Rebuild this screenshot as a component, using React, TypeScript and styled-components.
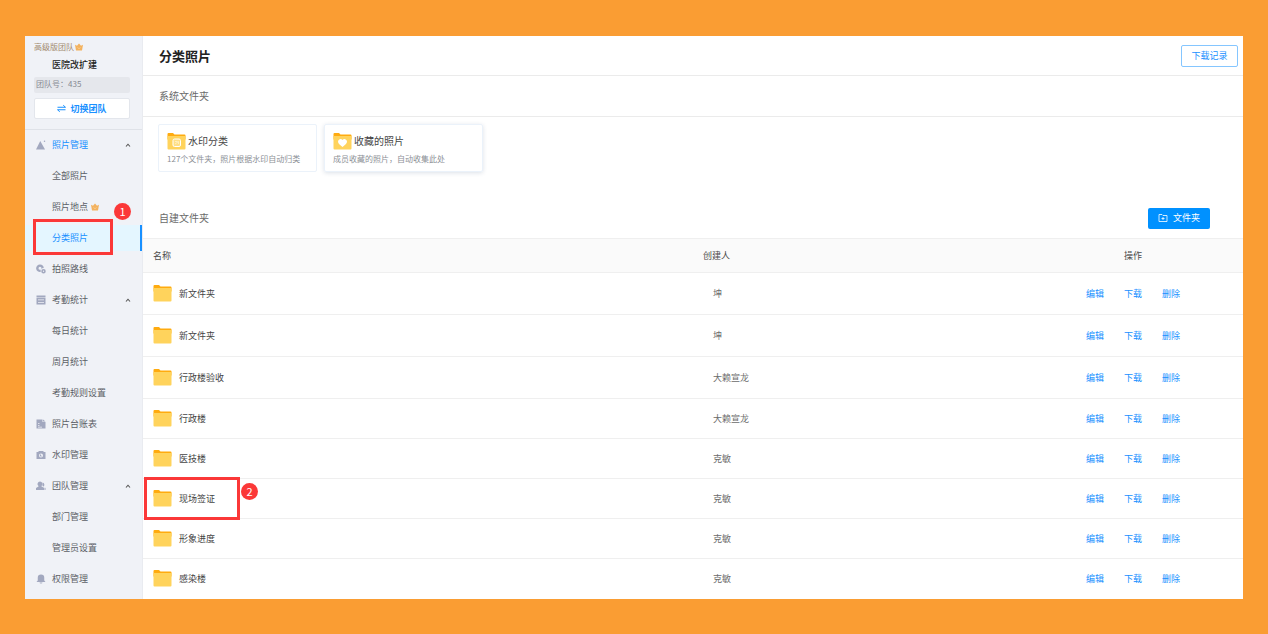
import React, { useState } from "react";
import styled, { createGlobalStyle, css } from "styled-components";

const BLUE = "#1890ff";
const RED = "#fb3838";

const GlobalStyle = createGlobalStyle`
  *, *::before, *::after { box-sizing: border-box; }
  body {
    margin: 0;
    background: #fa9d33;
    color: #555;
    font-family: "Noto Sans CJK SC", "Noto Sans", sans-serif;
    font-size: 9px;
    line-height: 14px;
  }
  h1, h2, h3, p, ul { margin: 0; padding: 0; font-weight: 400; }
  ul { list-style: none; }
  a { color: inherit; text-decoration: none; }
  button { font: inherit; color: inherit; padding: 0; margin: 0; border: 0; background: none; cursor: pointer; }
`;

const Page = styled.div`
  min-height: 100vh;
  padding: 36px 25px 35px;
  display: flex;
`;

const Sidebar = styled.aside`
  flex: 0 0 118px;
  background: #f0f2f7;
  border-right: 1px solid #e9ebf0;
`;

const TeamPanel = styled.div`
  height: 94px;
  padding: 4px 12px 0 9px;
  border-bottom: 1px solid #dfe2e8;
`;

const TeamPlan = styled.p`
  display: flex;
  align-items: center;
  gap: 1px;
  font-size: 8px;
  color: #a28a70;
`;

const TeamName = styled.h2`
  margin-top: 4px;
  padding-left: 18px;
  font-size: 9px;
  font-weight: 500;
  color: #222;
`;

const TeamId = styled.p`
  margin-top: 5px;
  padding: 0 2px;
  height: 16px;
  border-radius: 2px;
  background: #e5e7ec;
  color: #858992;
  font-size: 8px;
`;

const SwitchButton = styled.button`
  display: flex;
  align-items: center;
  justify-content: center;
  gap: 4px;
  width: 100%;
  height: 21px;
  margin-top: 5px;
  border: 1px solid #e3e6ec;
  border-radius: 2px;
  background: #fff;
  color: ${BLUE};
  font-weight: 700;
`;

const Menu = styled.ul`
  display: flex;
  flex-direction: column;
  gap: 5px;
  padding-top: 2px;
`;

const MenuItem = styled.li`
  position: relative;
`;

const entry = css`
  display: flex;
  align-items: center;
  width: 100%;
  height: 26px;
`;

const MenuEntry = styled.a<{ $active?: boolean; $child?: boolean }>`
  ${entry}
  gap: ${(p) => (p.$child ? 3 : 6)}px;
  padding-left: ${(p) => (p.$child ? 27 : 11)}px;
  color: ${(p) => (p.$active ? BLUE : "#5c5f66")};
  background: ${(p) => (p.$active ? "#e4f6ff" : "transparent")};
  border-right: 2px solid ${(p) => (p.$active ? BLUE : "transparent")};
`;

const MenuToggle = styled.button<{ $active?: boolean; $open: boolean }>`
  ${entry}
  gap: 6px;
  padding: 0 11px;
  color: ${(p) => (p.$active ? BLUE : "#5c5f66")};

  svg:last-child {
    margin-left: auto;
    transform: ${(p) => (p.$open ? "none" : "rotate(180deg)")};
  }
`;

const Main = styled.main`
  flex: 1;
  min-width: 0;
  background: #fff;
`;

const TitleBar = styled.header`
  display: flex;
  align-items: center;
  justify-content: space-between;
  height: 40px;
  padding: 0 5px 0 16px;
  border-bottom: 1px solid #ebebeb;
`;

const Title = styled.h1`
  font-size: 13px;
  line-height: 20px;
  font-weight: 700;
  color: #222;
`;

const OutlineButton = styled.button`
  width: 57px;
  height: 22px;
  border: 1px solid #85c6ff;
  border-radius: 2px;
  color: ${BLUE};
`;

const PrimaryButton = styled.button`
  display: flex;
  align-items: center;
  justify-content: center;
  gap: 5px;
  width: 62px;
  height: 21px;
  border-radius: 2px;
  background: #0091ff;
  color: #fff;
`;

const SectionBar = styled.div<{ $ruled?: boolean }>`
  display: flex;
  align-items: center;
  justify-content: space-between;
  height: ${(p) => (p.$ruled ? 41 : 40)}px;
  padding: 0 33px 0 16px;
  border-bottom: ${(p) => (p.$ruled ? "1px solid #ebebeb" : "0")};
`;

const SectionTitle = styled.h2`
  font-size: 10px;
  color: #6a6a6a;
`;

const Cards = styled.div`
  display: flex;
  gap: 7px;
  padding: 7px 15px 26px;
`;

const Card = styled.a<{ $raised?: boolean }>`
  width: 159px;
  height: 48px;
  padding: 8px 7px 0 8px;
  border: 1px solid #ebf2fa;
  border-radius: 2px;
  box-shadow: ${(p) => (p.$raised ? "0 1px 4px rgba(40, 70, 110, 0.16)" : "none")};
`;

const CardTitle = styled.h3`
  display: flex;
  align-items: center;
  gap: 2px;
  height: 16px;
  font-size: 10px;
  color: #444;
`;

const CardNote = styled.p`
  margin-top: 3px;
  font-size: 8px;
  line-height: 14px;
  color: #8c8f96;
  white-space: nowrap;
`;

const FolderTable = styled.table`
  width: 100%;
  table-layout: fixed;
  border-collapse: separate;
  border-spacing: 0;
`;

const HeadCell = styled.th<{ $width: string; $align?: string }>`
  width: ${(p) => p.$width};
  height: 35px;
  padding: 0 10px;
  border-top: 1px solid #efefef;
  border-bottom: 1px solid #efefef;
  background: #fafafa;
  color: #4a4a4a;
  font-weight: 400;
  text-align: ${(p) => p.$align ?? "left"};
`;

const Row = styled.tr<{ $height: number }>`
  height: ${(p) => p.$height}px;

  &:last-child td {
    border-bottom-color: #fff;
  }
`;

const Cell = styled.td`
  padding: 0 10px;
  border-bottom: 1px solid #efefef;
`;

const CreatorCell = styled(Cell)`
  padding-left: 20px;
  color: #6b6b6b;
`;

const FolderLink = styled.a`
  position: relative;
  display: inline-flex;
  align-items: center;
  gap: 7px;
  vertical-align: middle;
  color: #444;
`;

const Actions = styled.div`
  display: flex;
  justify-content: center;
  gap: 20px;
  color: ${BLUE};
`;

const Highlight = styled.span<{ $inset: string }>`
  position: absolute;
  inset: ${(p) => p.$inset};
  border: 3px solid ${RED};
  pointer-events: none;
`;

const StepBadge = styled.span`
  position: absolute;
  right: -21px;
  top: 3px;
  width: 17px;
  height: 17px;
  border-radius: 50%;
  background: ${RED};
  color: #fff;
  font-size: 11px;
  line-height: 17px;
  text-align: center;
`;

const RaisedBadge = styled(StepBadge)`
  top: -19px;
`;

const MenuIcon = ({ name }: { name: string }) => (
  <svg width="10" height="10" viewBox="0 0 20 20" fill="#a2a8bf" aria-hidden="true">
    {name === "photo" && (
      <>
        <path d="M8.5 2 18 19H0z" />
        <circle cx="17" cy="2.500" r="1.500" />
      </>
    )}
    {name === "route" && (
      <>
        <path fillRule="evenodd" d="M8 1a7.500 7.500 0 1 0 1.500 14.800A6 6 0 0 1 15.500 8 7.500 7.500 0 0 0 8 1zm0 4.500a3 3 0 1 1 0 6 3 3 0 0 1 0-6z" />
        <path fillRule="evenodd" d="M15 10a4.500 4.500 0 1 1 0 9 4.500 4.500 0 0 1 0-9zm0 3.200a1.300 1.300 0 1 0 0 2.600 1.300 1.300 0 0 0 0-2.600z" />
      </>
    )}
    {name === "calendar" && (
      <>
        <path d="M1 1h18v4H1z" />
        <path fillRule="evenodd" d="M1 6h18v13H1zm3 3v1.500h12V9zm0 5v1.500h12V14z" />
      </>
    )}
    {name === "report" && (
      <path fillRule="evenodd" d="M1 1h12v5h6v13H1zm3 7v1.500h3V8zm0 4v1.500h3V12zm0 3.500V17h8v-1.500zM14 1l5 4h-5z" />
    )}
    {name === "camera" && (
      <path fillRule="evenodd" d="M6 2h8l2 2h3v14H1V4h3zm4 5a4 4 0 1 0 0 8 4 4 0 0 0 0-8zm0 1.500V11l2 1a2.300 2.300 0 1 1-2-3.500z" />
    )}
    {name === "team" && (
      <>
        <path d="M8 1a5 5 0 0 1 3 9v1l6 3v4H0v-4l5-3v-1a5 5 0 0 1 3-9z" />
        <path d="M13 3a4.500 4.500 0 0 1 2 8l4 3v4h-1v-5l-5-3z" />
      </>
    )}
    {name === "bell" && (
      <path d="M10 1a6.500 6.500 0 0 1 6.500 6.500V13l2.500 3H1l2.500-3V7.500A6.500 6.500 0 0 1 10 1zM7 17h6a3 2 0 0 1-6 0z" />
    )}
  </svg>
);

const Chevron = () => (
  <svg width="6" height="6" viewBox="0 0 12 12" fill="none" stroke="#555" strokeWidth="2.200" aria-hidden="true">
    <path d="M2 9 6 4.500 10 9" />
  </svg>
);

const Crown = () => (
  <svg width="8" height="8" viewBox="0 0 16 16" aria-hidden="true">
    <path d="M0 3.500 4 5.500 8 1l4 4.500 4-2L14 15H2z" fill="#f3b25f" />
    <path d="M5 9 8 11.500 11 9" fill="none" stroke="#f9d49b" strokeWidth="1.500" />
  </svg>
);

const SwapIcon = () => (
  <svg width="9" height="9" viewBox="0 0 18 18" fill="none" stroke={BLUE} strokeWidth="2" aria-hidden="true">
    <path d="M1 6.500h16L12.500 2.500M17 11.500H1l4.500 4" />
  </svg>
);

const FolderPlusIcon = () => (
  <svg width="10" height="10" viewBox="0 0 20 20" fill="none" stroke="#fff" strokeWidth="1.600" aria-hidden="true">
    <path d="M2 3h6l2 2h8v12H2zM10 8v6M7 11h6" />
  </svg>
);

const FolderIcon = ({ mark }: { mark?: "stamp" | "heart" }) => (
  <svg width="19" height="17" viewBox="0 0 38 34" aria-hidden="true">
    <path d="M1 2a2 2 0 0 1 2-2h9l3 3h20a2 2 0 0 1 2 2v8H1z" fill="#ffab0f" />
    <path d="M1 6h36v25a2 2 0 0 1-2 2H3a2 2 0 0 1-2-2z" fill="#ffd35c" />
    {mark === "stamp" && (
      <>
        <rect x="12" y="12" width="15" height="15" rx="3" fill="#ffdf86" stroke="#fff" strokeWidth="2" />
        <path d="M16 17h5M16 22l7-5v5" fill="none" stroke="#fff3cf" strokeWidth="1.500" />
      </>
    )}
    {mark === "heart" && (
      <path d="M19 28c-5-4-9-7-9-11a5 5 0 0 1 9-3 5 5 0 0 1 9 3c0 4-4 7-9 11z" fill="#fff" />
    )}
  </svg>
);

type Child = { label: string; crown?: boolean; active?: boolean; step?: string };
type Group = { label: string; icon: string; active?: boolean; children?: Child[] };

const groups: Group[] = [
  {
    label: "照片管理",
    icon: "photo",
    active: true,
    children: [
      { label: "全部照片" },
      { label: "照片地点", crown: true },
      { label: "分类照片", active: true, step: "1" },
    ],
  },
  { label: "拍照路线", icon: "route" },
  {
    label: "考勤统计",
    icon: "calendar",
    children: [{ label: "每日统计" }, { label: "周月统计" }, { label: "考勤规则设置" }],
  },
  { label: "照片台账表", icon: "report" },
  { label: "水印管理", icon: "camera" },
  { label: "团队管理", icon: "team", children: [{ label: "部门管理" }, { label: "管理员设置" }] },
  { label: "权限管理", icon: "bell" },
];

const folders = [
  { name: "新文件夹", creator: "坤", height: 42 },
  { name: "新文件夹", creator: "坤", height: 42 },
  { name: "行政楼验收", creator: "大赖宣龙", height: 42 },
  { name: "行政楼", creator: "大赖宣龙", height: 40 },
  { name: "医技楼", creator: "克敏", height: 40 },
  { name: "现场签证", creator: "克敏", height: 40, step: "2" },
  { name: "形象进度", creator: "克敏", height: 40 },
  { name: "感染楼", creator: "克敏", height: 40 },
];

const MenuGroup = ({ group }: { group: Group }) => {
  const [open, setOpen] = useState(true);
  if (!group.children) {
    return (
      <MenuItem>
        <MenuEntry href="#">
          <MenuIcon name={group.icon} />
          {group.label}
        </MenuEntry>
      </MenuItem>
    );
  }
  return (
    <>
      <MenuItem>
        <MenuToggle type="button" $active={group.active} $open={open} aria-expanded={open} onClick={() => setOpen(!open)}>
          <MenuIcon name={group.icon} />
          {group.label}
          <Chevron />
        </MenuToggle>
      </MenuItem>
      {open &&
        group.children.map((child) => (
          <MenuItem key={child.label}>
            <MenuEntry href="#" $child $active={child.active}>
              {child.label}
              {child.crown && <Crown />}
            </MenuEntry>
            {child.step && (
              <Highlight $inset="-6px 29px -4px 8px">
                <RaisedBadge>{child.step}</RaisedBadge>
              </Highlight>
            )}
          </MenuItem>
        ))}
    </>
  );
};

export default function App() {
  return (
    <>
      <GlobalStyle />
      <Page>
        <Sidebar>
          <TeamPanel>
            <TeamPlan>
              高级版团队
              <Crown />
            </TeamPlan>
            <TeamName>医院改扩建</TeamName>
            <TeamId>团队号：435</TeamId>
            <SwitchButton type="button">
              <SwapIcon />
              切换团队
            </SwitchButton>
          </TeamPanel>
          <nav>
            <Menu>
              {groups.map((group) => (
                <MenuGroup key={group.label} group={group} />
              ))}
            </Menu>
          </nav>
        </Sidebar>
        <Main>
          <TitleBar>
            <Title>分类照片</Title>
            <OutlineButton type="button">下载记录</OutlineButton>
          </TitleBar>
          <SectionBar $ruled>
            <SectionTitle>系统文件夹</SectionTitle>
          </SectionBar>
          <Cards>
            <Card href="#">
              <CardTitle>
                <FolderIcon mark="stamp" />
                水印分类
              </CardTitle>
              <CardNote>127个文件夹，照片根据水印自动归类</CardNote>
            </Card>
            <Card href="#" $raised>
              <CardTitle>
                <FolderIcon mark="heart" />
                收藏的照片
              </CardTitle>
              <CardNote>成员收藏的照片，自动收集此处</CardNote>
            </Card>
          </Cards>
          <SectionBar>
            <SectionTitle>自建文件夹</SectionTitle>
            <PrimaryButton type="button">
              <FolderPlusIcon />
              文件夹
            </PrimaryButton>
          </SectionBar>
          <FolderTable>
            <thead>
              <tr>
                <HeadCell $width="50%">名称</HeadCell>
                <HeadCell $width="30%">创建人</HeadCell>
                <HeadCell $width="20%" $align="center">操作</HeadCell>
              </tr>
            </thead>
            <tbody>
              {folders.map((folder, i) => (
                <Row key={i} $height={folder.height}>
                  <Cell>
                    <FolderLink href="#">
                      <FolderIcon />
                      {folder.name}
                      {folder.step && (
                        <Highlight $inset="-13px -25px -13px -9px">
                          <StepBadge>{folder.step}</StepBadge>
                        </Highlight>
                      )}
                    </FolderLink>
                  </Cell>
                  <CreatorCell>{folder.creator}</CreatorCell>
                  <Cell>
                    <Actions>
                      <a href="#">编辑</a>
                      <a href="#">下载</a>
                      <a href="#">删除</a>
                    </Actions>
                  </Cell>
                </Row>
              ))}
            </tbody>
          </FolderTable>
        </Main>
      </Page>
    </>
  );
}
